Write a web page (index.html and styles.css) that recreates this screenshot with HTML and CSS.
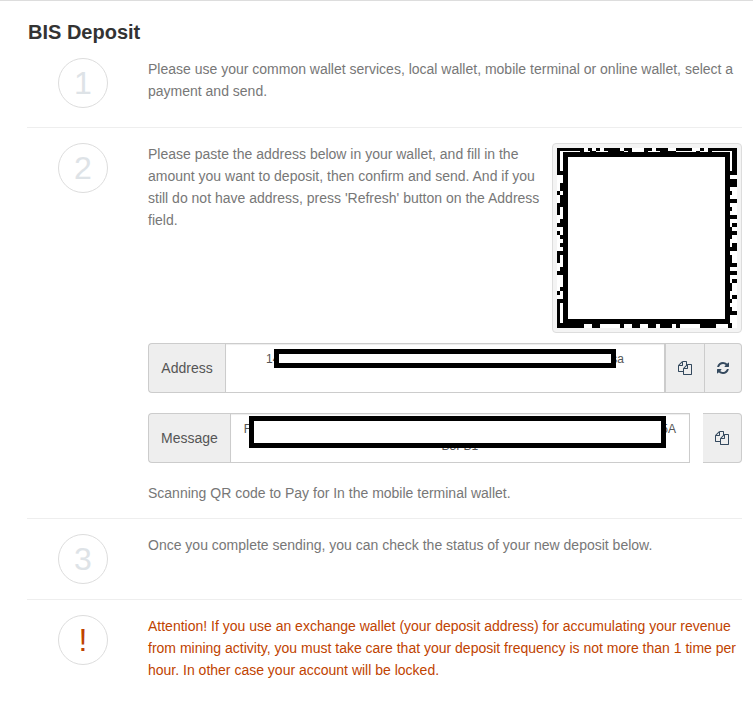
FILE: index.html
```html
<!DOCTYPE html>
<html lang="en">
<head>
<meta charset="utf-8">
<title>BIS Deposit</title>
<link rel="stylesheet" href="styles.css">
</head>
<body>
<svg class="defs" aria-hidden="true">
  <symbol id="copy" viewBox="0 0 1792 1792">
    <path fill="currentColor" d="M1696 384q40 0 68 28t28 68v1216q0 40-28 68t-68 28h-960q-40 0-68-28t-28-68v-288h-544q-40 0-68-28t-28-68v-672q0-40 20-88t48-76l408-408q28-28 76-48t88-20h416q40 0 68 28t28 68v328q68-40 128-40h416zm-544 213l-299 299h299v-299zm-640-384l-299 299h299v-299zm196 647l316-316v-416h-384v416q0 40-28 68t-68 28h-416v640h512v-256q0-40 20-88t48-76zm956 804v-1152h-384v416q0 40-28 68t-68 28h-416v640h896z"/>
  </symbol>
  <symbol id="refresh" viewBox="0 0 1536 1536">
    <path fill="currentColor" d="M1511 928q0 5-1 7-64 268-268 434.500T764 1536q-146 0-282.500-55T238 1324l-129 129q-19 19-45 19t-45-19-19-45V960q0-26 19-45t45-19h448q26 0 45 19t19 45-19 45l-137 137q71 66 161 102t187 36q134 0 250-65t186-179q11-17 53-117 8-23 30-23h192q13 0 22.500 9.500t9.500 22.500zm25-800v448q0 26-19 45t-45 19h-448q-26 0-45-19t-19-45 19-45l138-138Q969 256 768 256q-134 0-250 65T332 500q-11 17-53 117-8 23-30 23H50q-13 0-22.500-9.500T18 608v-7q65-268 270-434.500T768 0q146 0 284 55.500T1297 212l130-129q19-19 45-19t45 19 19 45z"/>
  </symbol>
</svg>
<main class="deposit">
  <h1>BIS Deposit</h1>
  <section class="step first">
    <div class="badge">1</div>
    <div class="body"><p>Please use your common wallet services, local wallet, mobile terminal or online wallet, select a payment and send.</p></div>
  </section>
  <section class="step second">
    <div class="badge">2</div>
    <div class="body">
      <div class="intro">
        <p>Please paste the address below in your wallet, and fill in the amount you want to deposit, then confirm and send. And if you still do not have address, press 'Refresh' button on the Address field.</p>
        <div class="thumb">
          <svg width="180" height="180" viewBox="0 0 180 180" shape-rendering="crispEdges">
            <path d="M0 0h180v180H0z" fill="#fff"/>
            <path d="M0 0h27v3H0zM31 0h4v3h-4zM39 0h4v3h-4zM47 0h16v3H47zM67 0h8v3h-8zM87 0h8v3h-8zM99 0h12v3H99zM119 0h16v3h-16zM143 0h4v3h-4zM151 0h29v3h-29z"/>
            <path d="M23 3h4v1h-4zM33 3h6v1h-6zM51 3h16v1H51zM71 3h4v1h-4zM87 3h4v1h-4zM103 3h16v1h-16zM139 3h4v1h-4zM151 3h4v1h-4z"/>
            <path d="M0 0h3v27H0zM0 43h3v4H0zM0 55h3v12H0zM0 75h3v4H0zM0 83h3v4H0zM0 103h3v12H0zM0 123h3v4H0zM0 143h3v4H0zM0 151h3v29H0z"/>
            <path d="M3 23h3v4H3zM3 35h3v8H3zM3 47h3v12H3zM3 71h3v8H3zM3 87h3v4H3zM3 95h3v4H3zM3 103h3v4H3zM3 119h3v8H3zM3 139h3v4H3zM3 151h3v4H3zM3 175h3v5H3z"/>
            <path d="M173 23h2v4h-2zM173 31h2v8h-2zM173 43h2v4h-2zM173 51h2v4h-2zM173 59h2v4h-2zM173 67h2v4h-2zM173 79h2v12h-2zM173 99h2v4h-2zM173 107h2v12h-2zM173 123h2v4h-2zM173 135h2v8h-2zM173 151h2v4h-2zM173 159h2v8h-2zM171 175h4v5h-4z"/>
            <path d="M175 0h5v27h-5zM175 31h5v8h-5zM175 51h5v4h-5zM175 67h5v4h-5zM175 75h5v4h-5zM175 83h5v4h-5zM175 95h5v8h-5zM175 115h5v4h-5zM175 123h5v4h-5zM175 131h5v4h-5zM175 147h5v4h-5zM175 163h5v4h-5z"/>
            <path d="M0 176h27v4H0zM35 176h8v4h-8zM63 176h4v4h-4zM75 176h8v4h-8zM91 176h8v4h-8zM103 176h12v4h-12zM119 176h4v4h-4zM143 176h16v4h-16z"/>
            <path d="M6 4h167v172H6z"/>
            <path d="M11 9h157v162H11z" fill="#fff"/>
          </svg>
        </div>
      </div>
      <div class="group address">
        <span class="addon label">Address</span>
        <div class="field"><div class="line split"><span>14</span><span>sa</span></div><i class="mask mask-address"></i></div>
        <button class="addon copy"><svg width="14" height="14"><use href="#copy"/></svg></button>
        <button class="addon last"><svg width="12" height="12"><use href="#refresh"/></svg></button>
      </div>
      <div class="group message">
        <span class="addon label">Message</span>
        <div class="field"><div class="line split"><span>F</span><span>5A</span></div><div class="line">B3FB1</div><i class="mask mask-message"></i></div>
        <button class="addon last"><svg width="14" height="14"><use href="#copy"/></svg></button>
      </div>
      <p>Scanning QR code to Pay for In the mobile terminal wallet.</p>
    </div>
  </section>
  <section class="step">
    <div class="badge">3</div>
    <div class="body"><p>Once you complete sending, you can check the status of your new deposit below.</p></div>
  </section>
  <section class="step attention">
    <div class="badge">!</div>
    <div class="body"><p>Attention! If you use an exchange wallet (your deposit address) for accumulating your revenue from mining activity, you must take care that your deposit frequency is not more than 1 time per hour. In other case your account will be locked.</p></div>
  </section>
</main>
</body>
</html>
```
FILE: styles.css
```css
* { box-sizing: border-box; }
body {
  margin: 0;
  background: #fff;
  color: #777;
  font: 14px/22px "Liberation Sans", Arial, sans-serif;
}
.defs { display: none; }
.deposit {
  min-height: 703px;
  padding: 20px 11px 0 27px;
  border-top: 1px solid #ddd;
}
h1 { margin: 0; padding-left: 1px; color: #333; font-size: 20px; line-height: 22px; font-weight: 700; }
p { margin: 0; }
.step {
  display: flex;
  padding: 15px 0;
  border-bottom: 1px solid #eee;
}
.step.first { height: 85px; }
.step.second { height: 391px; }
.step.attention { border: 0; color: #bf4300; }
.badge {
  flex: none;
  width: 50px;
  height: 50px;
  margin: 0 40px 0 31px;
  border: 1px solid #ddd;
  border-radius: 50%;
  color: #dee3e7;
  font-size: 32px;
  line-height: 49px;
  text-align: center;
}
.attention .badge { color: #bf4300; }
.body { flex: 1; min-width: 0; }
.intro { display: flex; gap: 10px; height: 190px; }
.intro p { flex: 1; }
.thumb {
  flex: none;
  width: 190px;
  height: 190px;
  padding: 4px;
  border: 1px solid #ddd;
  border-radius: 4px;
  background: #f4f4f4;
}
.thumb svg { display: block; }
.group { display: flex; height: 50px; margin-top: 10px; }
.group.message { margin: 20px 0 19px; }
.addon {
  display: flex;
  align-items: center;
  justify-content: center;
  flex: none;
  padding: 0;
  border: 1px solid #ccc;
  background: #eee;
  color: #34495e;
  font: inherit;
}
.addon svg { display: block; }
.label {
  padding: 0 12px;
  border-right: 0;
  border-radius: 4px 0 0 4px;
  color: #555;
}
.address .label { width: 77px; }
.copy { width: 40px; }
.last { width: 37px; border-left: 0; border-radius: 0 4px 4px 0; }
.message .last { width: 39px; margin-left: 13px; }
.field {
  position: relative;
  flex: 1;
  min-width: 0;
  padding: 7px 12px;
  border: 1px solid #ccc;
  box-shadow: inset 0 1px 1px rgba(0, 0, 0, .075);
  color: #555;
  font-size: 12px;
  line-height: 17px;
  text-align: center;
}
.split { display: flex; justify-content: space-between; padding: 0 1px; }
.address .split { padding: 0 28px; }
.mask { position: absolute; border: 5px solid #000; background: #fff; }
.mask-address { left: 48px; top: 5px; width: 342px; height: 19px; }
.mask-message { left: 18px; top: 2px; width: 417px; height: 32px; }
```
